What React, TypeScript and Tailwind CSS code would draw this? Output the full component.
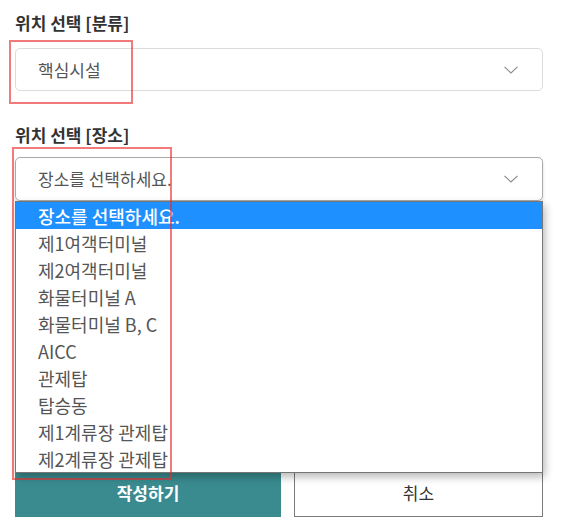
import React from "react";

const Chevron = () => (
  <svg width="14" height="8" viewBox="0 0 14 8" fill="none" className="shrink-0">
    <path d="M0.5 0.8 L7 7 L13.5 0.8" stroke="#8a8a8a" strokeWidth="1.1" />
  </svg>
);

const items = [
  "장소를 선택하세요.",
  "제1여객터미널",
  "제2여객터미널",
  "화물터미널 A",
  "화물터미널 B, C",
  "AICC",
  "관제탑",
  "탑승동",
  "제1계류장 관제탑",
  "제2계류장 관제탑",
];

export default function App() {
  return (
    <div
      className="relative w-[574px] h-[529px] bg-white overflow-hidden"
      style={{ fontFamily: '"Noto Sans CJK KR", "Noto Sans", sans-serif' }}
    >
      <div className="pl-[15px] pr-[31px] pt-[11px] flex flex-col">
        <div className="text-[17px] leading-[24px] font-bold text-[#333]">위치 선택 [분류]</div>
        <div className="mt-[13px] h-[43px] rounded-[5px] border border-[#dcdcdc] flex items-center justify-between pl-[22px] pr-[24px]">
          <span className="text-[17px] text-[#555]">핵심시설</span>
          <Chevron />
        </div>

        <div className="mt-[32px] text-[17px] leading-[24px] font-bold text-[#333]">위치 선택 [장소]</div>
        <div className="relative mt-[10px]">
          <div className="h-[44px] rounded-[5px] border border-[#a9a9a9] shadow-[0_2px_3px_rgba(0,0,0,0.15)] flex items-center justify-between pl-[22px] pr-[24px]">
            <span className="text-[17px] text-[#555]">장소를 선택하세요.</span>
            <Chevron />
          </div>
        </div>

        <div className="mt-[268px] flex gap-[13px]">
          <button className="w-[266px] h-[48px] bg-[#3a8b8f] text-white text-[17px] font-bold">작성하기</button>
          <button className="w-[249px] h-[48px] border border-[#7a7a7a] bg-white text-[#333] text-[17px]">취소</button>
        </div>
      </div>

      {/* open native dropdown list */}
      <div className="absolute left-[15px] top-[201px] w-[528px] border border-[#767676] bg-white shadow-[2px_4px_8px_rgba(0,0,0,0.28)]">
        {items.map((t, i) => (
          <div
            key={t}
            className={
              i === 0
                ? "h-[27px] flex items-center pl-[22px] pt-[2px] bg-[#1e90ff] text-white text-[18px] font-medium"
                : "h-[27px] flex items-center pl-[22px] pt-[2px] text-[#555] text-[18px]"
            }
          >
            {t}
          </div>
        ))}
      </div>

      {/* red annotation boxes */}
      <div className="absolute left-[9px] top-[40px] w-[124px] h-[64px] border-2 border-[rgba(235,40,40,0.62)] pointer-events-none" />
      <div className="absolute left-[12px] top-[147px] w-[160px] h-[333px] border-2 border-[rgba(235,40,40,0.62)] pointer-events-none" />
    </div>
  );
}
